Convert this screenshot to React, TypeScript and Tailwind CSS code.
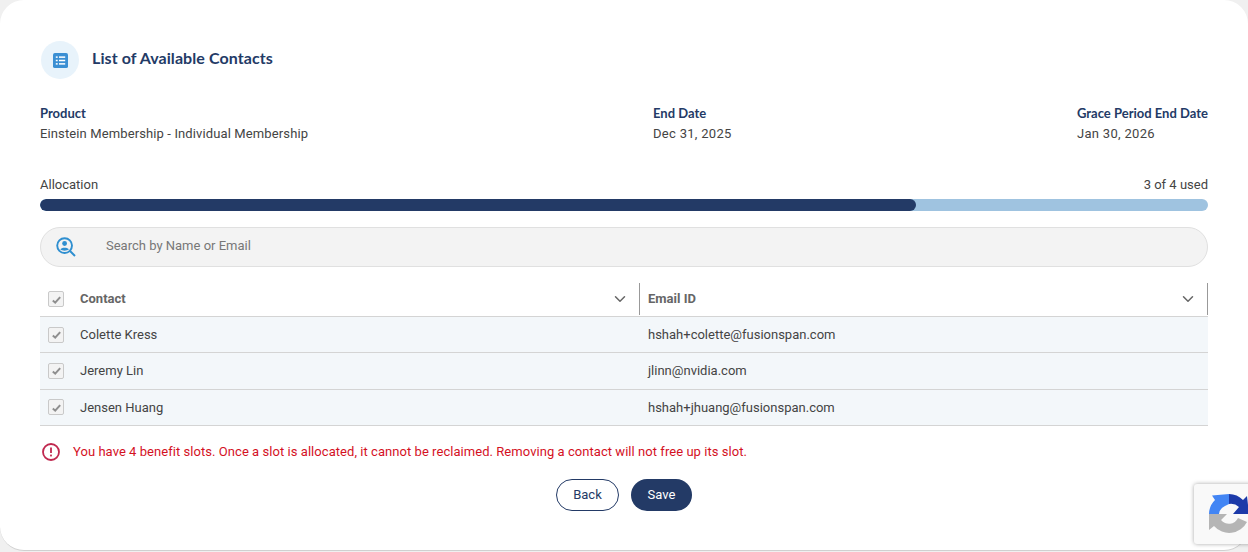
import React from "react"
import { ChevronDown } from "lucide-react"

const contacts = [
  { name: "Colette Kress", email: "hshah+colette@fusionspan.com" },
  { name: "Jeremy Lin", email: "jlinn@nvidia.com" },
  { name: "Jensen Huang", email: "hshah+jhuang@fusionspan.com" },
]

function Check() {
  return (
    <span className="flex h-4 w-4 shrink-0 items-center justify-center rounded-[2px] border border-[#c9c9c9] bg-[#f3f3f3]">
      <svg viewBox="0 0 12 12" className="h-[11px] w-[11px]">
        <path d="M2 7 L4.600 9.400 L10 3.400" fill="none" stroke="#8f8f8f" strokeWidth="2.200" />
      </svg>
    </span>
  )
}

function ListIcon() {
  return (
    <svg viewBox="0 0 16 16" className="h-[15px] w-[15px]">
      <rect width="16" height="16" rx="2" fill="#3b8fd3" />
      <g fill="#fff">
        <rect x="3" y="3.600" width="2" height="1.600" />
        <rect x="6.400" y="3.600" width="6.600" height="1.600" />
        <rect x="3" y="7.200" width="2" height="1.600" />
        <rect x="6.400" y="7.200" width="6.600" height="1.600" />
        <rect x="3" y="10.800" width="2" height="1.600" />
        <rect x="6.400" y="10.800" width="6.600" height="1.600" />
      </g>
    </svg>
  )
}

function SearchUser() {
  return (
    <svg viewBox="0 0 20 20" className="h-5 w-5">
      <circle cx="8.600" cy="8.600" r="7.400" fill="none" stroke="#2f8fd0" strokeWidth="1.900" />
      <circle cx="8.600" cy="6.500" r="2.400" fill="#2f8fd0" />
      <path d="M4.400 12.600 C5 10 12.200 10 12.800 12.600 C11 14 6.200 14 4.400 12.600 Z" fill="#2f8fd0" />
      <path d="M14 14 L19 19" stroke="#2f8fd0" strokeWidth="2" />
    </svg>
  )
}

function Recaptcha() {
  return (
    <div className="absolute left-[1194px] top-[484px] h-[60px] w-[70px] overflow-hidden rounded-[3px] bg-[#f9f9f9] shadow-[0_0_4px_rgba(0,0,0,0.35)]">
      <svg viewBox="0 0 44 44" className="absolute left-[13px] top-[8px] h-[44px] w-[44px]">
        <path d="M2 22 A20 20 0 0 1 8 8 L5 3.500 L22 2 L22 12 L18 14 A10 10 0 0 0 12 22 Z" fill="#4285f4" />
        <path d="M22 2 A20 20 0 0 1 36 8 L40 4 L42 22 L26 22 L32 15 A12 12 0 0 0 22 12 Z" fill="#1c3aa9" />
        <path d="M2 22 L2 38 L7 34 A20 20 0 0 0 40 30 L31 26 A10 10 0 0 1 14 28 L20 22 Z" fill="#b5b5b5" />
      </svg>
    </div>
  )
}

export default function App() {
  return (
    <div className="relative h-[552px] w-[1248px] overflow-hidden bg-[#f0f0f0] font-['Roboto',sans-serif] text-[13px] text-[#444]">
      <div className="h-[551px] rounded-[24px] border-b border-[#d0d0d0] bg-white px-10 pt-[41px]">
        <div className="flex items-center gap-[13px] pl-px">
          <span className="flex h-[38px] w-[38px] items-center justify-center rounded-full bg-[#e8f3fb]">
            <ListIcon />
          </span>
          <h1 className="mb-1 font-['Lato',sans-serif] text-[16px] font-bold tracking-[0.08px] text-[#233a66]">List of Available Contacts</h1>
        </div>

        <div className="mt-6 flex justify-between">
          <div className="w-[613px]">
            <div className="font-['Lato',sans-serif] text-[13px] font-bold leading-5 text-[#233a66]">Product</div>
            <div className="mt-px leading-5 tracking-[0.12px]">Einstein Membership - Individual Membership</div>
          </div>
          <div className="mr-auto">
            <div className="font-['Lato',sans-serif] text-[13px] font-bold leading-5 text-[#233a66]">End Date</div>
            <div className="mt-px leading-5 tracking-[0.3px]">Dec 31, 2025</div>
          </div>
          <div className="w-[131px]">
            <div className="whitespace-nowrap font-['Lato',sans-serif] text-[13px] font-bold leading-5 text-[#233a66]">Grace Period End Date</div>
            <div className="mt-px leading-5 tracking-[0.3px]">Jan 30, 2026</div>
          </div>
        </div>

        <div className="mt-[31px] flex justify-between leading-5">
          <span>Allocation</span>
          <span>3 of 4 used</span>
        </div>
        <div className="mt-1 h-3 overflow-hidden rounded-full bg-[#9fc3e0]">
          <div className="h-full w-3/4 rounded-full bg-[#233a66]" />
        </div>

        <div className="mt-4 flex h-10 items-center rounded-full border border-[#e0e0e0] bg-[#f3f3f3] pl-[15px]">
          <SearchUser />
          <span className="ml-[30px] pb-[2px] text-[#777]">Search by Name or Email</span>
        </div>

        <div className="mt-[15px] flex h-[35px] items-center border-b border-[#d4d4d4]">
          <div className="flex h-full w-[600px] items-center pl-2">
            <Check />
            <span className="ml-4 flex-1 font-bold text-[#666]">Contact</span>
            <ChevronDown className="mr-[11px] h-[18px] w-[18px] text-[#666]" />
          </div>
          <div className="ml-[-1px] flex h-[32px] flex-1 items-center border-l border-[#999] pl-2">
            <span className="flex-1 font-bold text-[#666]">Email ID</span>
            <ChevronDown className="mr-[10px] h-[18px] w-[18px] text-[#666]" />
            <span className="h-full border-r border-[#999]" />
          </div>
        </div>

        {contacts.map((c) => (
          <div key={c.name} className="flex h-[36.330px] items-center border-b border-[#d4d4d4] bg-[#f3f7fa]">
            <div className="flex w-[608px] items-center pl-2">
              <Check />
              <span className="ml-4">{c.name}</span>
            </div>
            <span>{c.email}</span>
          </div>
        ))}

        <div className="mt-[17px] flex items-center gap-[13px] pl-[2px] text-[#d4111f]">
          <svg viewBox="0 0 18 18" className="h-[18px] w-[18px] shrink-0">
            <circle cx="9" cy="9" r="8" fill="none" stroke="#c0284f" strokeWidth="1.800" />
            <path d="M9 4.500 V10" stroke="#c0284f" strokeWidth="1.800" />
            <rect x="8.100" y="11.600" width="1.800" height="1.800" fill="#c0284f" />
          </svg>
          <span className="leading-4 tracking-[0.05px]">You have 4 benefit slots. Once a slot is allocated, it cannot be reclaimed. Removing a contact will not free up its slot.</span>
        </div>

        <div className="mt-[18px] flex justify-center gap-3">
          <button className="h-8 w-[63px] rounded-full border border-[#233a66] bg-white text-[#233a66]">Back</button>
          <button className="h-8 w-[61px] rounded-full bg-[#233a66] text-white">Save</button>
        </div>
      </div>
      <Recaptcha />
    </div>
  )
}
